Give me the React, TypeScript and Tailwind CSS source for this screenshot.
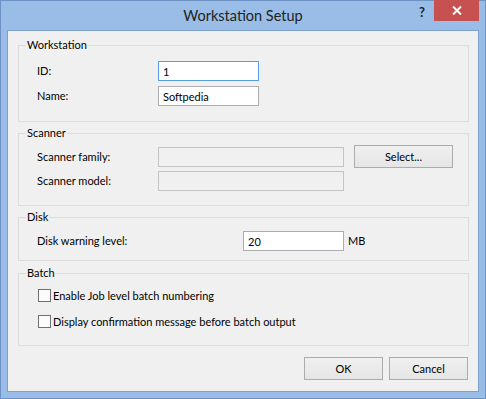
import React from 'react'

const Group = ({title, className, children}:{title:string, className:string, children:React.ReactNode}) => {
  return (
    <div className={`relative ml-[10px] mr-[9px] border border-[#dcdcdc] ${className}`}>
      <span className='absolute -top-[9px] left-[7px] bg-[#f0f0f0] px-px leading-[16px]'>{title}</span>
      {children}
    </div>
  )
}

const Field = ({value, width, focused}:{value?:string, width:string, focused?:boolean}) => {
  const border = focused ? 'border-[#569de5]' : value === undefined ? 'border-[#c4c4c4]' : 'border-[#abadb3]'
  const bg = value === undefined ? 'bg-[#f0f0f0]' : 'bg-white'
  return (
    <input
      readOnly
      value={value ?? ''}
      className={`h-[20px] ${width} border ${border} ${bg} pl-[4px] text-[11px] leading-[18px] text-black outline-none`}
    />
  )
}

const Btn = ({label, className}:{label:string, className:string}) => (
  <button className={`h-[23px] border border-[#acacac] bg-gradient-to-b from-[#f0f0f0] to-[#e5e5e5] text-[11px] text-black ${className}`}>
    {label}
  </button>
)

const Check = ({label}:{label:string}) => (
  <div className='flex h-[17px] items-center gap-[2px]'>
    <span className='h-[13px] w-[13px] border border-[#707070] bg-[#fbfbfb]'></span>
    <span>{label}</span>
  </div>
)

export default function App() {
  return (
    <div className="flex h-[399px] w-[486px] flex-col border border-[#6d93c5] bg-[#99bde7] font-['Segoe_UI',Lato,'Liberation_Sans',sans-serif]">
      <div className='relative flex h-[29px] items-center justify-center'>
        <span className='text-[14.5px] text-[#222]'>Workstation Setup</span>
        <span className='absolute left-[418px] top-[2px] text-[13px] font-bold text-[#222]'>?</span>
        <div className='absolute -top-px right-[6px] flex h-[21px] w-[45px] items-center justify-center bg-[#c75050]'>
          <svg width="10" height="9" viewBox="0 0 10 9">
            <path d="M1 0.5 L9 8.5 M9 0.5 L1 8.5" stroke="white" strokeWidth="2" />
          </svg>
        </div>
      </div>

      <div className='mx-[6px] flex h-[362px] flex-col border border-[#7d9fcb] bg-[#f0f0f0] text-[11px] leading-[16px] text-black'>
        <Group title='Workstation' className='mt-[14px]'>
          <div className='grid grid-cols-[121px_101px] items-center gap-y-[5px] pb-[15px] pl-[18px] pt-[15px]'>
            <span>ID:</span>
            <Field value='1' width='w-[101px]' focused />
            <span>Name:</span>
            <Field value='Softpedia' width='w-[101px]' />
          </div>
        </Group>

        <Group title='Scanner' className='mt-[11px]'>
          <div className='flex flex-col pb-[14px] pl-[18px] pt-[11px]'>
            <div className='flex h-[23px] items-center'>
              <span className='w-[121px]'>Scanner family:</span>
              <Field width='w-[186px]' />
              <Btn label='Select...' className='ml-[10px] w-[99px]' />
            </div>
            <div className='mt-[3px] flex h-[20px] items-center'>
              <span className='w-[121px]'>Scanner model:</span>
              <Field width='w-[186px]' />
            </div>
          </div>
        </Group>

        <Group title='Disk' className='mt-[11px]'>
          <div className='mb-[9px] mt-[13px] flex h-[20px] items-center pl-[18px]'>
            <span className='w-[206px]'>Disk warning level:</span>
            <Field value='20' width='w-[101px]' />
            <span className='ml-[4px]'>MB</span>
          </div>
        </Group>

        <Group title='Batch' className='mt-[12px]'>
          <div className='flex flex-col gap-[9px] pb-[15px] pl-[19px] pt-[13px]'>
            <Check label='Enable Job level batch numbering' />
            <Check label='Display confirmation message before batch output' />
          </div>
        </Group>

        <div className='mr-[10px] mt-[11px] flex justify-end gap-[6px]'>
          <Btn label='OK' className='w-[79px]' />
          <Btn label='Cancel' className='w-[79px]' />
        </div>
      </div>
    </div>
  )
}
